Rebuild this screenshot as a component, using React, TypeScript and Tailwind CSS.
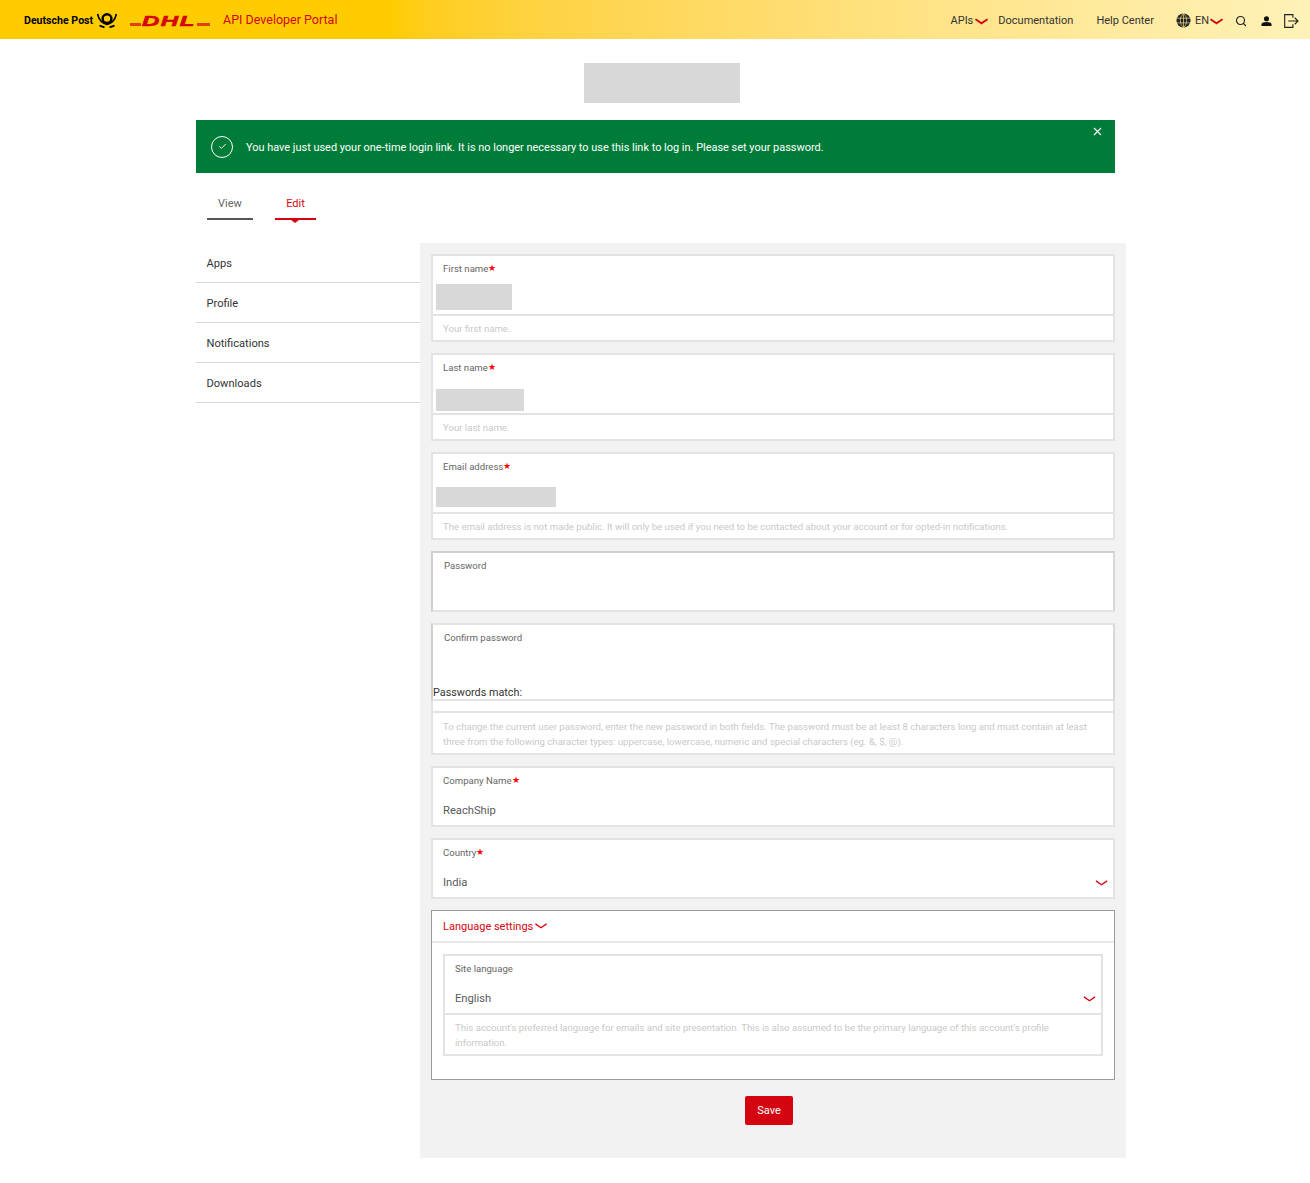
import { Search, X, Check } from "lucide-react";
import type { ReactNode } from "react";

const font = { fontFamily: 'Roboto, "Noto Sans", sans-serif' };

function Chevron({ className, strokeWidth = 1.6 }: { className: string; strokeWidth?: number }) {
  return (
    <svg viewBox="0 0 14 7" className={className} fill="none" stroke="#d40511" strokeWidth={strokeWidth}>
      <polyline points="0.5,1 7,5.5 13.5,1" />
    </svg>
  );
}

function Star() {
  return <span className="text-[#ff0000] text-[9px] leading-none">★</span>;
}

function PostHorn() {
  return (
    <svg viewBox="0 0 20 15" className="w-[20px] h-[15px]" fill="none" stroke="#000">
      <circle cx="10" cy="5.6" r="4.4" strokeWidth="2.4" />
      <path d="M0.6 0.8 C1.5 6 4 10 10 11.4 C16 10 18.5 6 19.4 0.8" strokeWidth="1.7" />
      <path d="M2.5 12.6 L7.5 14.4 M17.5 12.6 L12.5 14.4" strokeWidth="1.8" />
    </svg>
  );
}

function DhlLogo() {
  return (
    <div className="flex items-center w-[80px] h-[12px] ml-[13px]">
      <div className="w-[11px] h-[3px] bg-[#e2400c] mt-[7px] shrink-0" />
      <span
        className="text-[#d40511] text-[15px] leading-none font-bold italic w-[56px] shrink-0 text-center tracking-[1px] scale-x-[1.6] [-webkit-text-stroke:0.6px_#d40511]"
        style={{ fontFamily: '"Liberation Sans", sans-serif' }}
      >
        DHL
      </span>
      <div className="w-[13px] h-[3px] bg-[#e2400c] mt-[7px] shrink-0" />
    </div>
  );
}

function Field({
  label,
  required,
  hint,
  compact,
  children,
}: {
  label: string;
  required?: boolean;
  hint?: ReactNode;
  compact?: boolean;
  children?: ReactNode;
}) {
  return (
    <div className="border-2 border-[#e3e3e3] bg-white">
      <div className={compact ? "h-[57px]" : "h-[58px]"}>
        <div className="pl-[10px] pt-[4.5px] text-[9.6px] leading-[16px] text-[#666] flex items-center">
          {label}
          {required ? <Star /> : null}
        </div>
        {children}
      </div>
      {hint ? (
        <div className="border-t-2 border-[#e3e3e3] px-[10px] py-[4.5px] text-[9.6px] leading-[15px] text-[#c9c9c9]">
          {hint}
        </div>
      ) : null}
    </div>
  );
}

function Redacted({ className }: { className: string }) {
  return <div className={`bg-[#d8d8d8] ml-[3px] ${className}`} />;
}

function SelectValue({ value }: { value: string }) {
  return (
    <div className="flex items-center justify-between pl-[10px] pr-[5px] mt-[14px] text-[11.2px] leading-[16px] text-[#5a5a5a]">
      {value}
      <Chevron className="w-[13px] h-[6px]" />
    </div>
  );
}

export default function App() {
  return (
    <div className="bg-white min-h-[1183px]" style={font}>
      <header className="h-[39px] flex items-center justify-between bg-gradient-to-r from-[#ffcc00] from-30% to-[#fff2b8] pl-[24px] pr-[11px] pt-[2px]">
        <div className="flex items-center">
          <span className="text-[10.6px] w-[69px] whitespace-nowrap font-bold text-black mr-[4px] mt-[1px]">Deutsche Post</span>
          <PostHorn />
          <DhlLogo />
          <span className="text-[#d40511] text-[12.5px] ml-[13px]">API Developer Portal</span>
        </div>
        <nav className="flex items-center text-[#333] text-[11px]">
          <span className="pt-[1px]">APIs</span>
          <Chevron className="w-[13px] h-[7px] ml-[2px] mt-[2px]" strokeWidth={2} />
          <span className="ml-[10px] pt-[1px]">Documentation</span>
          <span className="ml-[23px] pt-[1px]">Help Center</span>
          <svg viewBox="0 0 16 16" className="w-[15px] h-[15px] ml-[22px]" fill="none">
            <circle cx="8" cy="8" r="7.5" fill="#222" />
            <path d="M0.5 5.5H15.5M0.5 10.5H15.5M8 0.5V15.5M8 0.5C3.5 4 3.5 12 8 15.5M8 0.5C12.5 4 12.5 12 8 15.5" stroke="#ffe98f" strokeWidth="0.7" />
          </svg>
          <span className="ml-[4px] pt-[1px]">EN</span>
          <Chevron className="w-[13px] h-[7px] ml-[1px] mt-[2px]" strokeWidth={2} />
          <Search className="w-[12px] h-[12px] ml-[12px] text-[#222]" strokeWidth={2.4} />
          <svg viewBox="0 0 12 11" className="w-[11px] h-[10px] ml-[14px]" fill="#111">
            <circle cx="6" cy="3" r="2.8" />
            <path d="M0.5 11 V9 C0.5 7.2 3 6.5 6 6.5 C9 6.5 11.5 7.2 11.5 9 V11 Z" />
          </svg>
          <svg viewBox="0 0 16 15" className="w-[15px] h-[14px] ml-[12px]" fill="none" stroke="#222" strokeWidth="1.2">
            <path d="M9.5 4 V0.7 H0.7 V14.3 H9.5 V11" />
            <path d="M4.5 7.5 H15 M11.5 4 L15 7.5 L11.5 11" />
          </svg>
        </nav>
      </header>

      <div className="w-[156px] h-[40px] bg-[#d8d8d8] ml-[584px] mt-[24px]" />

      <div className="ml-[196px] w-[919px] h-[53px] mt-[17px] bg-[#007c39] relative flex items-center pl-[15px] text-white">
        <div className="w-[22px] h-[22px] rounded-full border border-white flex items-center justify-center">
          <Check className="w-[9px] h-[9px]" strokeWidth={2.5} />
        </div>
        <span className="ml-[13px] text-[10.95px] pt-[3px]">
          You have just used your one-time login link. It is no longer necessary to use this link to log in. Please set your password.
        </span>
        <X className="absolute right-[11px] top-[5px] w-[13px] h-[13px]" strokeWidth={2} />
      </div>

      <div className="ml-[207px] mt-[21px] flex text-[11px] h-[28px] items-start">
        <div className="w-[46px] h-[26px] border-b-2 border-[#555] text-center text-[#666] leading-[20px]">View</div>
        <div className="ml-[22px] w-[41px] h-[26px] border-b-2 border-[#d40511] text-center text-[#d40511] leading-[20px] relative">
          Edit
          <span className="absolute left-[16px] top-[26px] w-0 h-0 border-x-[4px] border-x-transparent border-t-[3px] border-t-[#d40511]" />
        </div>
      </div>

      <div className="flex ml-[196px] mt-[21px]">
        <aside className="w-[224px] text-[11.1px] text-[#333]">
          {["Apps", "Profile", "Notifications", "Downloads"].map((item) => (
            <div key={item} className="h-[40px] border-b border-[#d8d8d8] pl-[10.5px] pt-[4px] flex items-center">
              {item}
            </div>
          ))}
        </aside>

        <main className="w-[706px] h-[915px] bg-[#f2f2f2] p-[11px] flex flex-col gap-[11px]">
          <Field label="First name" required hint="Your first name.">
            <Redacted className="w-[76px] h-[26px] mt-[7px]" />
          </Field>
          <Field label="Last name" required hint="Your last name.">
            <Redacted className="w-[88px] h-[22px] mt-[13px]" />
          </Field>
          <Field label="Email address" required hint="The email address is not made public. It will only be used if you need to be contacted about your account or for opted-in notifications.">
            <Redacted className="w-[120px] h-[20px] mt-[12px]" />
          </Field>

          <div>
            <div className="h-[61px] border-2 border-t-[#cfcfcf] border-l-[#cfcfcf] border-r-[#d8d8d8] border-b-[#e3e3e3] bg-white pl-[11px] pt-[5px] text-[9.6px] leading-[16px] text-[#666]">
              Password
            </div>
            <div className="h-[78px] mt-[11px] border-2 border-t-[#e3e3e3] border-l-[#cfcfcf] border-r-[#d8d8d8] border-b-[#e3e3e3] bg-white relative pl-[11px] pt-[5px] text-[9.6px] leading-[16px] text-[#666]">
              Confirm password
              <span className="absolute left-0 bottom-[-2px] text-[10.8px] leading-[16px] text-[#333]">Passwords match:</span>
            </div>
            <div className="h-[54px] border-2 border-t-0 border-[#e3e3e3] bg-white">
              <div className="h-[10px]" />
              <div className="border-t-2 border-[#e3e3e3] px-[10px] pt-[6px] text-[9.6px] leading-[15px] text-[#c9c9c9]">
                To change the current user password, enter the new password in both fields. The password must be at least 8 characters long and must contain at least three from the following character types: uppercase, lowercase, numeric and special characters (eg. &amp;, $, @).
              </div>
            </div>
          </div>

          <Field label="Company Name" required compact>
            <div className="pl-[10px] mt-[14px] text-[11.2px] leading-[16px] text-[#5a5a5a]">ReachShip</div>
          </Field>
          <Field label="Country" required compact>
            <SelectValue value="India" />
          </Field>

          <div className="h-[170px] border border-[#9a9a9a] bg-white">
            <div className="h-[32px] border-b-2 border-[#e8e8e8] pl-[11px] pt-[2px] flex items-center text-[11px] text-[#d40511]">
              Language settings
              <Chevron className="w-[12px] h-[6px] ml-[2px] mb-[2px]" />
            </div>
            <div className="mx-[11px] mt-[11px]">
              <Field
                label="Site language"
                compact
                hint="This account's preferred language for emails and site presentation. This is also assumed to be the primary language of this account's profile information."
              >
                <SelectValue value="English" />
              </Field>
            </div>
          </div>

          <div className="flex justify-center mt-[5px]">
            <button type="button" className="w-[48px] h-[29px] pt-[1px] mr-[8px] rounded-[2px] bg-[#d40511] text-white text-[11px]">
              Save
            </button>
          </div>
        </main>
      </div>
    </div>
  );
}
